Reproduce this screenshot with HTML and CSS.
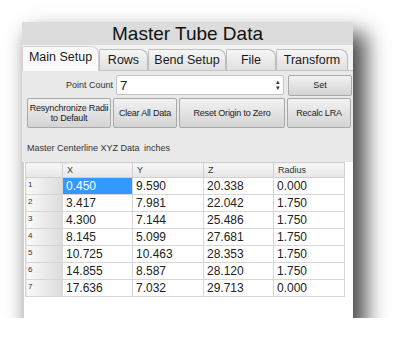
FILE: index.html
```html
<!DOCTYPE html>
<html lang="en">
<head>
  <meta charset="UTF-8" />
  <title>Master Tube Data</title>
  <link rel="stylesheet" href="styles.css">
</head>
<body>
  <div class="window">
    <div class="title">Master Tube Data</div>

    <div class="tabs">
      <div class="tab active" style="width:77px">Main Setup</div>
      <div class="tab" style="width:49px">Rows</div>
      <div class="tab" style="width:78px">Bend Setup</div>
      <div class="tab" style="width:50px">File</div>
      <div class="tab" style="width:72px">Transform</div>
    </div>

    <div class="panel">
      <div class="point-row">
        <label class="point-label">Point Count</label>
        <div class="spinbox">
          <span>7</span>
          <span class="spin-arrows">&#9652;<br>&#9662;</span>
        </div>
        <button class="btn set-btn">Set</button>
      </div>

      <div class="btn-row">
        <button class="btn" style="width:84px">Resynchronize Radii<br>to Default</button>
        <button class="btn" style="width:64px">Clear All Data</button>
        <button class="btn" style="width:106px">Reset Origin to Zero</button>
        <button class="btn" style="width:64px">Recalc LRA</button>
      </div>

      <div class="data-label">Master Centerline XYZ Data <span class="units">inches</span></div>
    </div>

    <div class="table-area">
      <table class="grid">
        <thead>
          <tr>
            <th class="corner"></th>
            <th>X</th>
            <th>Y</th>
            <th>Z</th>
            <th>Radius</th>
          </tr>
        </thead>
        <tbody>
          <tr><td class="rownum">1</td><td class="selected">0.450</td><td>9.590</td><td>20.338</td><td>0.000</td></tr>
          <tr><td class="rownum">2</td><td>3.417</td><td>7.981</td><td>22.042</td><td>1.750</td></tr>
          <tr><td class="rownum">3</td><td>4.300</td><td>7.144</td><td>25.486</td><td>1.750</td></tr>
          <tr><td class="rownum">4</td><td>8.145</td><td>5.099</td><td>27.681</td><td>1.750</td></tr>
          <tr><td class="rownum">5</td><td>10.725</td><td>10.463</td><td>28.353</td><td>1.750</td></tr>
          <tr><td class="rownum">6</td><td>14.855</td><td>8.587</td><td>28.120</td><td>1.750</td></tr>
          <tr><td class="rownum">7</td><td>17.636</td><td>7.032</td><td>29.713</td><td>0.000</td></tr>
        </tbody>
      </table>
    </div>
  </div>
</body>
</html>
```

FILE: styles.css
```css
body {
  margin: 0;
  background: white;
  font-family: "Liberation Sans", Arial, sans-serif;
  color: #222;
}

.window {
  margin: 22px 0 0 22px;
  width: 331px;
  height: 296px;
  background: #ececec;
  box-shadow: 10px 14px 20px 3px rgba(0,0,0,0.7);
  display: flex;
  flex-direction: column;
  overflow: hidden;
}

.title {
  height: 23px;
  line-height: 24px;
  background: #dcdcdc;
  text-align: center;
  font-size: 19px;
  color: #111;
  border-bottom: 1px solid #f4f4f4;
}

.tabs {
  display: flex;
  height: 24px;
  background: #f2f2f2;
  border-bottom: 1px solid #c4c4c4;
}

.tab {
  box-sizing: border-box;
  margin-top: 3px;
  height: 21px;
  line-height: 21px;
  text-align: center;
  font-size: 12.5px;
  color: #1a1a1a;
  background: linear-gradient(#f6f6f6, #e0e0e0);
  border: 1px solid #bdbdbd;
  border-bottom: none;
  border-radius: 2px 8px 0 0;
}

.tab.active {
  margin-top: 0;
  height: 25px;
  line-height: 20px;
  background: #fafafa;
  border-color: #d0d0d0;
  position: relative;
  z-index: 1;
}

.panel {
  background: #e9e9e9;
}

.point-row {
  display: flex;
  align-items: center;
  height: 26px;
  padding-top: 1px;
}

.point-label {
  width: 91px;
  text-align: right;
  font-size: 9px;
  color: #333;
  margin-right: 3px;
}

.spinbox {
  box-sizing: border-box;
  width: 168px;
  height: 20px;
  background: white;
  border: 1px solid #c4c4c4;
  border-radius: 2px;
  display: flex;
  justify-content: space-between;
  align-items: center;
  padding: 0 3px;
  font-size: 13px;
}

.spin-arrows {
  font-size: 7px;
  line-height: 6px;
  color: #333;
}

.btn {
  box-sizing: border-box;
  font-family: "Liberation Sans", Arial, sans-serif;
  font-size: 9px;
  color: #222;
  background: linear-gradient(#f2f2f2, #d4d4d4);
  border: 1px solid #a8a8a8;
  border-radius: 2px;
  padding: 0;
  margin: 0;
  line-height: 10px;
  white-space: nowrap;
}

.set-btn {
  width: 64px;
  height: 21px;
  margin-left: 4px;
}

.btn-row {
  display: flex;
  gap: 2px;
  padding: 0 0 0 5px;
  height: 30px;
}

.btn-row .btn {
  height: 30px;
  letter-spacing: -0.2px;
}

.data-label {
  font-size: 9px;
  color: #333;
  padding: 15px 0 0 5px;
  height: 19px;
}

.units {
  margin-left: 2px;
}

.table-area {
  flex: 1;
  background: white;
  border-left: 2px solid #cfcfcf;
  padding: 0 0 0 1px;
}

.grid {
  border-collapse: collapse;
  font-size: 12px;
  table-layout: fixed;
}

.grid th {
  box-sizing: border-box;
  height: 15px;
  font-size: 9px;
  font-weight: normal;
  text-align: left;
  padding: 0 0 0 4px;
  background: linear-gradient(#f8f8f8, #e6e6e6);
  border: 1px solid #d0d0d0;
  color: #333;
}

.grid th:nth-child(1) { width: 37px; }
.grid th:nth-child(2) { width: 70px; }
.grid th:nth-child(3) { width: 71px; }
.grid th:nth-child(4) { width: 70px; }
.grid th:nth-child(5) { width: 71px; }

.grid td {
  height: 16px;
  padding: 0 0 0 3px;
  border: 1px solid #d6d6d6;
  color: #222;
}

.grid td.rownum {
  font-size: 8px;
  vertical-align: top;
  padding: 2px 0 0 2px;
  height: 14px;
  background: linear-gradient(90deg, #fafafa, #dcdcdc);
  color: #333;
}

.grid td.selected {
  background: #3399ff;
  color: white;
}
```
